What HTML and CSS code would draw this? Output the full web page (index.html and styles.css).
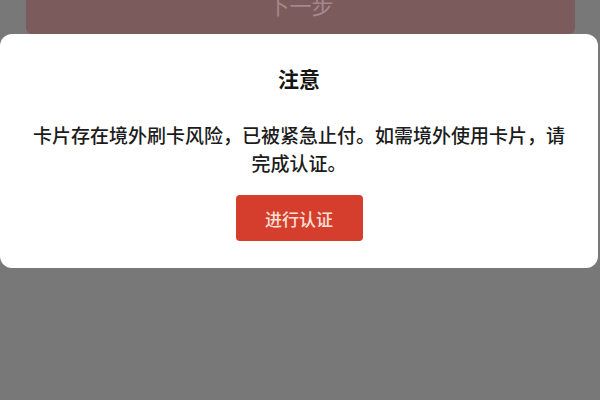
FILE: index.html
```html
<!DOCTYPE html>
<html lang="zh">
<head>
<meta charset="utf-8">
<link rel="stylesheet" href="styles.css">
</head>
<body>
<div class="page">
  <div class="next-btn">下一步</div>
</div>
<div class="dialog">
  <div class="title">注意</div>
  <div class="message">卡片存在境外刷卡风险，已被紧急止付。如需境外使用卡片，请完成认证。</div>
  <div class="action">进行认证</div>
</div>
</body>
</html>
```
FILE: styles.css
```css
html, body {
  margin: 0;
  padding: 0;
  width: 600px;
  height: 400px;
  overflow: hidden;
  background: #787878;
  font-family: "Noto Sans CJK SC", "Noto Sans", sans-serif;
}
.page {
  padding: 0 25px 0 26px;
}
.next-btn {
  margin-top: -26px;
  height: 60px;
  background: #7c5b5d;
  color: #a3898b;
  font-size: 22px;
  display: flex;
  align-items: center;
  justify-content: center;
  border-radius: 6px;
}
.dialog {
  position: absolute;
  left: 0;
  top: 34px;
  width: 598px;
  height: 234px;
  box-sizing: border-box;
  background: #ffffff;
  border-radius: 12px;
  padding: 30px 30px 0;
  display: flex;
  flex-direction: column;
  align-items: center;
}
.title {
  font-size: 21px;
  line-height: 28px;
  font-weight: 700;
  color: #151515;
}
.message {
  margin-top: 29px;
  font-size: 19px;
  line-height: 28px;
  font-weight: 500;
  color: #1c1c1c;
  text-align: center;
}
.action {
  margin-top: 18px;
  width: 127px;
  height: 46px;
  border-radius: 4px;
  background: #d53e2c;
  color: #fbe0d8;
  font-size: 17px;
  font-weight: 500;
  display: flex;
  align-items: center;
  justify-content: center;
}
```
